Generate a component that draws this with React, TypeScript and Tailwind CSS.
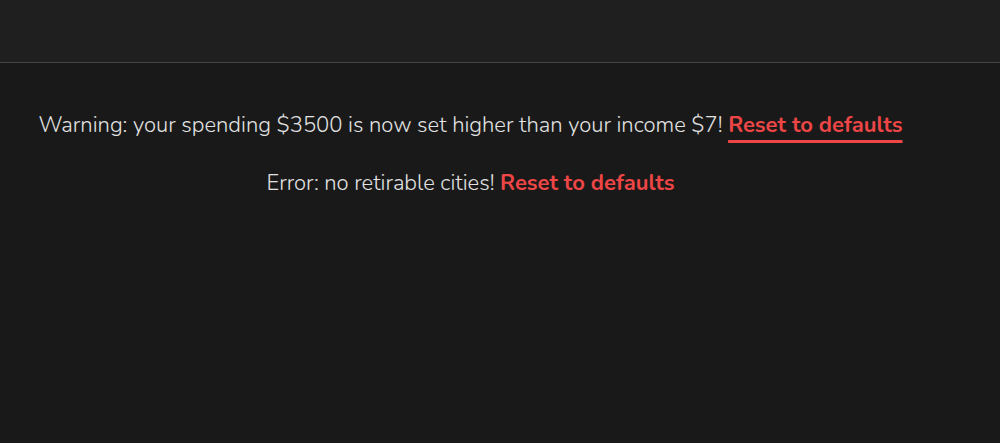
export default function App() {
    return (
        <div className="min-h-[443px] bg-[#191919] font-['Nunito','Lato',sans-serif]">
            <div className="h-[63px] bg-[#1f1f1f] border-b border-[#454545]" />

            <div className="w-[941px] flex flex-col items-center pt-[46px] gap-[26px] text-[22px] leading-[32px] font-light text-[#e2e2e2]">
                <p>
                    Warning: your spending $3500 is now set higher than your income $7!{" "}
                    <a className="font-bold text-[#ee4646] underline decoration-[3px] underline-offset-[8px]">
                        Reset to defaults
                    </a>
                </p>
                <p>
                    Error: no retirable cities!{" "}
                    <a className="font-bold text-[#ee4646]">Reset to defaults</a>
                </p>
            </div>
        </div>
    );
}
